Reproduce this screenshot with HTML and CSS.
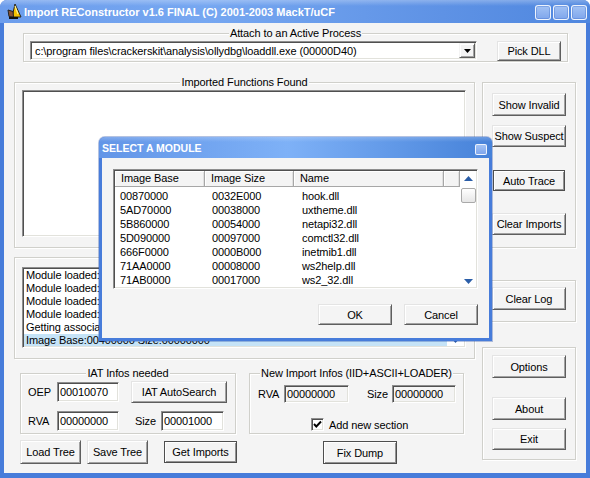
FILE: index.html
```html
<!DOCTYPE html>
<html>
<head>
<meta charset="utf-8">
<link rel="stylesheet" href="styles.css">
</head>
<body>
<div class="window">
  <div class="titlebar">
    <svg class="app-icon" width="16" height="17" viewBox="0 0 16 17">
      <path d="M9 1 L15 14 L6 14 Z" fill="#F6C300" stroke="#222" stroke-width="1"/>
      <path d="M9 3 L12 11" stroke="#FFF29A" stroke-width="1.2"/>
      <path d="M2 7 L7 8.5 L7.5 14 L3 13.5 Z" fill="#8A5436" stroke="#222" stroke-width="1"/>
      <rect x="3" y="14" width="9" height="2" fill="#111"/>
    </svg>
    <span class="title">Import REConstructor v1.6 FINAL (C) 2001-2003 MackT/uCF</span>
    <div class="tb-buttons"><span class="tb-btn"></span><span class="tb-btn"></span><span class="tb-btn"></span></div>
  </div>
  <div class="client">
    <div class="group attach">
      <div class="group-title">Attach to an Active Process</div>
      <div class="attach-row">
        <div class="combo">
          <span class="combo-text">c:\program files\crackerskit\analysis\ollydbg\loaddll.exe (00000D40)</span>
          <span class="combo-btn"><svg width="7" height="4" viewBox="0 0 7 4"><polygon points="0,0 7,0 3.5,4" fill="#000"/></svg></span>
        </div>
        <button class="btn pick">Pick DLL</button>
      </div>
    </div>
    <div class="main">
      <div class="left">
        <div class="group imported">
          <div class="group-title">Imported Functions Found</div>
          <div class="sunken tree"></div>
        </div>
        <div class="group log">
          <div class="sunken logbox">
            <div class="log-lines">
              <div class="line">Module loaded: ws2_32.dll</div>
              <div class="line">Module loaded: ws2help.dll</div>
              <div class="line">Module loaded: inetmib1.dll</div>
              <div class="line">Module loaded: comctl32.dll</div>
              <div class="line">Getting associated modules...</div>
              <div class="line sel">Image Base:00400000 Size:00000000</div>
            </div>
            <div class="vscroll">
              <svg class="arrow-down" width="9" height="5" viewBox="0 0 9 5"><polygon points="0,0 9,0 4.5,5" fill="#2B5EA8"/></svg>
            </div>
          </div>
        </div>
        <div class="bottom">
          <div class="iat-col">
            <div class="group iat">
              <div class="group-title">IAT Infos needed</div>
              <div class="row r1">
                <span class="lbl w29">OEP</span>
                <span class="field w62">00010070</span>
                <button class="btn autosearch">IAT AutoSearch</button>
              </div>
              <div class="row r2">
                <span class="lbl w29">RVA</span>
                <span class="field w62">00000000</span>
                <span class="lbl size1">Size</span>
                <span class="field w63">00001000</span>
              </div>
            </div>
            <div class="btn-row">
              <button class="btn treebtn">Load Tree</button>
              <button class="btn treebtn save">Save Tree</button>
              <button class="btn def getimp">Get Imports</button>
            </div>
          </div>
          <div class="new-col">
            <div class="group newimp">
              <div class="group-title">New Import Infos (IID+ASCII+LOADER)</div>
              <div class="row nr1">
                <span class="lbl w26">RVA</span>
                <span class="field gray w65">00000000</span>
                <span class="lbl size2">Size</span>
                <span class="field gray w64">00000000</span>
              </div>
              <div class="row nr2">
                <span class="check"><svg width="11" height="11" viewBox="0 0 11 11"><polyline points="2,5 4.3,7.5 9,2.5" fill="none" stroke="#000" stroke-width="1.9"/></svg></span>
                <span class="check-label">Add new section</span>
              </div>
            </div>
            <button class="btn def fix">Fix Dump</button>
          </div>
        </div>
      </div>
      <div class="right">
        <div class="group g1">
          <button class="btn rb b-inv">Show Invalid</button>
          <button class="btn rb b-sus">Show Suspect</button>
          <button class="btn def b-auto">Auto Trace</button>
          <button class="btn rb b-clr">Clear Imports</button>
        </div>
        <div class="group g2">
          <button class="btn rb b-log">Clear Log</button>
        </div>
        <div class="group g3">
          <button class="btn rb b-opt">Options</button>
          <button class="btn rb b-about">About</button>
          <button class="btn rb b-exit">Exit</button>
        </div>
      </div>
    </div>
  </div>

  <div class="dialog">
    <div class="dlg-title">
      <span class="dlg-caption">SELECT A MODULE</span>
      <span class="dlg-close"></span>
    </div>
    <div class="dlg-client">
      <div class="lv">
        <div class="lv-main">
          <div class="lv-head">
            <span class="hc c1">Image Base</span>
            <span class="hc c2">Image Size</span>
            <span class="hc c3">Name</span>
            <span class="hc c4"></span>
          </div>
          <div class="lv-rows">
            <div class="lv-row"><span>00870000</span><span>0032E000</span><span>hook.dll</span></div>
            <div class="lv-row"><span>5AD70000</span><span>00038000</span><span>uxtheme.dll</span></div>
            <div class="lv-row"><span>5B860000</span><span>00054000</span><span>netapi32.dll</span></div>
            <div class="lv-row"><span>5D090000</span><span>00097000</span><span>comctl32.dll</span></div>
            <div class="lv-row"><span>666F0000</span><span>0000B000</span><span>inetmib1.dll</span></div>
            <div class="lv-row"><span>71AA0000</span><span>00008000</span><span>ws2help.dll</span></div>
            <div class="lv-row"><span>71AB0000</span><span>00017000</span><span>ws2_32.dll</span></div>
          </div>
        </div>
        <div class="lv-scroll">
          <svg class="arrow-up" width="9" height="5" viewBox="0 0 9 5"><polygon points="0,5 9,5 4.5,0" fill="#2B5EA8"/></svg>
          <span class="thumb"></span>
          <svg class="arrow-dn" width="9" height="5" viewBox="0 0 9 5"><polygon points="0,0 9,0 4.5,5" fill="#2B5EA8"/></svg>
        </div>
      </div>
      <div class="dlg-buttons">
        <button class="btn dlgbtn">OK</button>
        <button class="btn dlgbtn">Cancel</button>
      </div>
    </div>
  </div>
</div>
</body>
</html>
```

FILE: styles.css
```css
* { box-sizing: border-box; }

body {
  margin: 0;
  background: #ffffff;
  font-family: "Liberation Sans", Arial, sans-serif;
  font-size: 11px;
  letter-spacing: -0.1px;
  color: #000;
}

.window {
  position: relative;
  width: 590px;
  height: 478px;
  background: #477CDA;
  border-radius: 7px 7px 0 0;
  display: flex;
  flex-direction: column;
  overflow: hidden;
}

/* title bar */
.titlebar {
  height: 23px;
  flex: none;
  display: flex;
  align-items: center;
  padding-left: 6px;
  background:
    linear-gradient(180deg, rgba(255,255,255,0.28) 0, rgba(255,255,255,0) 6px),
    linear-gradient(90deg, #6C9DEC 0%, #76A7F1 35%, #5E92E5 75%, #4F87DF 100%);
}
.app-icon { flex: none; margin-top: -1px; }
.title {
  margin-left: 2px;
  color: #ffffff;
  font-weight: bold;
  font-size: 11px;
  letter-spacing: 0;
  white-space: nowrap;
}
.tb-buttons {
  margin-left: auto;
  align-self: flex-start;
  margin-top: 5px;
  padding-right: 3px;
  display: flex;
  gap: 2px;
}
.tb-btn {
  width: 16px;
  height: 15px;
  border: 1px solid rgba(255,255,255,0.85);
  border-radius: 3px;
  background: linear-gradient(180deg, #A2C2F4 0%, #7FA6EC 100%);
  box-shadow: inset 0 0 0 1px rgba(60,110,200,0.35);
}

.client {
  flex: 1;
  margin: 0 4px 5px;
  background: #F4F4F4;
}

/* group boxes */
.group {
  display: flex;
  flex-direction: column;
  border: 1px solid #D0D0CB;
  box-shadow: inset 1px 1px 0 #ffffff, 1px 1px 0 #ffffff;
}
.group-title {
  align-self: center;
  height: 13px;
  line-height: 13px;
  margin: -7px 0 -6px;
  padding: 0 1px;
  background: #F4F4F4;
  white-space: nowrap;
}

/* buttons */
.btn {
  font-family: "Liberation Sans", Arial, sans-serif;
  font-size: 11px;
  letter-spacing: -0.1px;
  color: #000;
  padding: 0;
  margin: 0;
  flex: none;
  align-self: flex-start;
  background: #F4F4F4;
  border: 1px solid;
  border-color: #E4E4E4 #5E5E5E #5E5E5E #E4E4E4;
  box-shadow: inset 1px 1px 0 #FFFFFF, inset -1px -1px 0 #A2A2A2;
  display: flex;
  align-items: center;
  justify-content: center;
  white-space: nowrap;
}
.btn.def {
  border: 1px solid #4E4E4E;
  box-shadow: inset 1px 1px 0 #FFFFFF, inset -1px -1px 0 #939393;
}

/* sunken boxes */
.sunken, .field, .combo, .lv, .check {
  background: #ffffff;
  border: 1px solid;
  border-color: #8E8E8E #FFFFFF #FFFFFF #8E8E8E;
  box-shadow: inset 1px 1px 0 #505050, inset -1px -1px 0 #E2E2DC;
}

/* attach */
.attach {
  margin: 10px 0 0 19px;
  width: 545px;
  height: 29px;
}
.attach-row {
  display: flex;
  margin-top: 7px;
  padding-left: 6px;
}
.combo {
  width: 447px;
  height: 19px;
  padding: 1px;
  display: flex;
  align-items: center;
}
.combo-text {
  padding-left: 3px;
  white-space: nowrap;
  overflow: hidden;
}
.combo-btn {
  margin-left: auto;
  width: 16px;
  height: 15px;
  flex: none;
  background: #F4F4F4;
  border: 1px solid;
  border-color: #F4F4F4 #5E5E5E #5E5E5E #F4F4F4;
  box-shadow: inset 1px 1px 0 #FFFFFF, inset -1px -1px 0 #A2A2A2;
  display: flex;
  align-items: center;
  justify-content: center;
}
.pick {
  margin-left: 20px;
  width: 64px;
  height: 20px;
}

/* main area */
.main {
  display: flex;
  gap: 7px;
  margin-top: 20px;
}
.left {
  width: 461px;
  margin-left: 10px;
  display: flex;
  flex-direction: column;
}
.imported {
  height: 166px;
}
.tree {
  margin: 7px 0 0 7px;
  width: 444px;
  height: 147px;
}
.log {
  margin-top: 9px;
  height: 102px;
}
.logbox {
  margin: 9px 0 0 7px;
  width: 444px;
  height: 81px;
  padding: 1px;
  display: flex;
  overflow: hidden;
}
.log-lines {
  flex: 1;
  overflow: hidden;
}
.line {
  height: 13px;
  line-height: 13px;
  padding-left: 2px;
  white-space: nowrap;
}
.line.sel {
  background: #C5E3F7;
}
.vscroll {
  width: 17px;
  flex: none;
  display: flex;
  flex-direction: column;
  align-items: center;
  justify-content: flex-end;
  padding-bottom: 3px;
}

/* bottom area */
.bottom {
  display: flex;
  margin-top: 14px;
  padding-left: 6px;
}
.iat-col {
  width: 217px;
  display: flex;
  flex-direction: column;
}
.iat {
  width: 216px;
  height: 61px;
}
.row {
  display: flex;
  align-items: center;
}
.r1 {
  margin-top: 7px;
  height: 22px;
  padding-left: 7px;
}
.r2 {
  margin-top: 8px;
  height: 20px;
  padding-left: 7px;
}
.lbl { flex: none; white-space: nowrap; }
.w29 { width: 29px; }
.w26 { width: 26px; }
.size1 { margin-left: 16px; width: 26px; }
.size2 { margin-left: 18px; width: 25px; }

.field {
  height: 20px;
  flex: none;
  display: flex;
  align-items: center;
  padding-left: 2px;
  white-space: nowrap;
}
.field.gray {
  height: 18px;
  background: #F4F4F4;
}
.w62 { width: 62px; }
.w63 { width: 63px; }
.w64 { width: 64px; }
.w65 { width: 65px; }

.autosearch {
  margin-left: 12px;
  width: 96px;
  height: 22px;
  align-self: center;
}
.btn-row {
  display: flex;
  align-items: center;
  margin-top: 6px;
  height: 24px;
}
.treebtn {
  width: 61px;
  height: 24px;
  align-self: center;
}
.treebtn.save { margin-left: 6px; }
.getimp {
  margin-left: 16px;
  width: 73px;
  height: 22px;
  align-self: center;
}

.new-col {
  margin-left: 12px;
  display: flex;
  flex-direction: column;
}
.newimp {
  width: 215px;
  height: 61px;
}
.nr1 {
  margin-top: 11px;
  height: 18px;
  padding-left: 8px;
}
.nr2 {
  margin-top: 15px;
  height: 13px;
  padding-left: 61px;
}
.check {
  width: 13px;
  height: 13px;
  flex: none;
  display: flex;
  align-items: center;
  justify-content: center;
}
.check-label { margin-left: 5px; white-space: nowrap; }
.fix {
  margin-top: 7px;
  margin-left: 74px;
  width: 74px;
  height: 23px;
}

/* right column */
.right {
  width: 94px;
  display: flex;
  flex-direction: column;
}
.right .group { padding-left: 9px; }
.rb { width: 74px; height: 23px; }
.g1 { height: 166px; }
.b-inv { margin-top: 10px; }
.b-sus { margin-top: 9px; height: 22px; }
.b-auto { margin-top: 23px; margin-left: 1px; width: 72px; height: 21px; }
.b-clr { margin-top: 22px; height: 22px; }
.g2 { margin-top: 32px; height: 42px; }
.b-log { margin-top: 6px; }
.g3 { margin-top: 25px; height: 113px; }
.b-opt { margin-top: 7px; }
.b-about { margin-top: 19px; }
.b-exit { margin-top: 8px; height: 22px; }

/* modal dialog */
.dialog {
  position: absolute;
  left: 99px;
  top: 137px;
  width: 393px;
  height: 204px;
  background: #477CDA;
  border-radius: 6px 6px 0 0;
  padding: 0 3px 3px;
  display: flex;
  flex-direction: column;
  box-shadow: 0 0 0 1px rgba(40,80,170,0.35);
}
.dlg-title {
  height: 21px;
  flex: none;
  margin: 0 -3px;
  padding: 0 5px 0 3px;
  display: flex;
  align-items: center;
  border-radius: 6px 6px 0 0;
  background:
    linear-gradient(180deg, rgba(255,255,255,0.2) 0, rgba(255,255,255,0) 5px),
    linear-gradient(90deg, #6295E7 0%, #7EB1F7 48%, #4682D9 100%);
}
.dlg-caption {
  color: #ffffff;
  font-weight: bold;
  font-size: 10.5px;
  letter-spacing: 0;
  white-space: nowrap;
  margin-top: 1px;
}
.dlg-close {
  margin-left: auto;
  align-self: flex-start;
  margin-top: 7px;
  width: 12px;
  height: 11px;
  border: 1px solid rgba(255,255,255,0.85);
  border-radius: 2px;
  background: linear-gradient(180deg, #A2C2F4 0%, #7FA6EC 100%);
}
.dlg-client {
  flex: 1;
  background: #F4F4F4;
  padding: 11px 11px 0;
  display: flex;
  flex-direction: column;
}
.lv {
  width: 365px;
  height: 120px;
  padding: 1px;
  display: flex;
  flex: none;
}
.lv-main {
  width: 345px;
  display: flex;
  flex-direction: column;
}
.lv-head {
  display: flex;
  height: 16px;
  flex: none;
}
.hc {
  height: 16px;
  line-height: 15px;
  padding-left: 6px;
  background: #F4F4F4;
  border-right: 1px solid #A7A7A7;
  border-bottom: 1px solid #A7A7A7;
  box-shadow: inset 1px 1px 0 #FFFFFF, inset -1px 0 0 #E0E0E0;
  white-space: nowrap;
  overflow: hidden;
}
.c1 { width: 90px; }
.c2 { width: 89px; }
.c3 { width: 150px; }
.c4 { width: 16px; }
.lv-rows { padding-top: 2px; }
.lv-row {
  display: grid;
  grid-template-columns: 92px 90px 1fr;
  height: 14px;
  line-height: 14px;
  white-space: nowrap;
}
.lv-row span { padding-left: 5px; }
.lv-scroll {
  width: 16px;
  flex: none;
  display: flex;
  flex-direction: column;
  align-items: center;
}
.arrow-up { margin-top: 5px; }
.thumb {
  margin-top: 7px;
  width: 15px;
  height: 15px;
  border: 1px solid #A9A9A9;
  border-radius: 2px;
  background: linear-gradient(180deg, #FFFFFF 0%, #E6E6E6 100%);
  margin-left: 1px;
}
.arrow-dn { margin-top: auto; margin-bottom: 3px; }
.dlg-buttons {
  display: flex;
  justify-content: flex-end;
  gap: 12px;
  margin-top: 15px;
}
.dlgbtn { width: 74px; height: 21px; }
```
